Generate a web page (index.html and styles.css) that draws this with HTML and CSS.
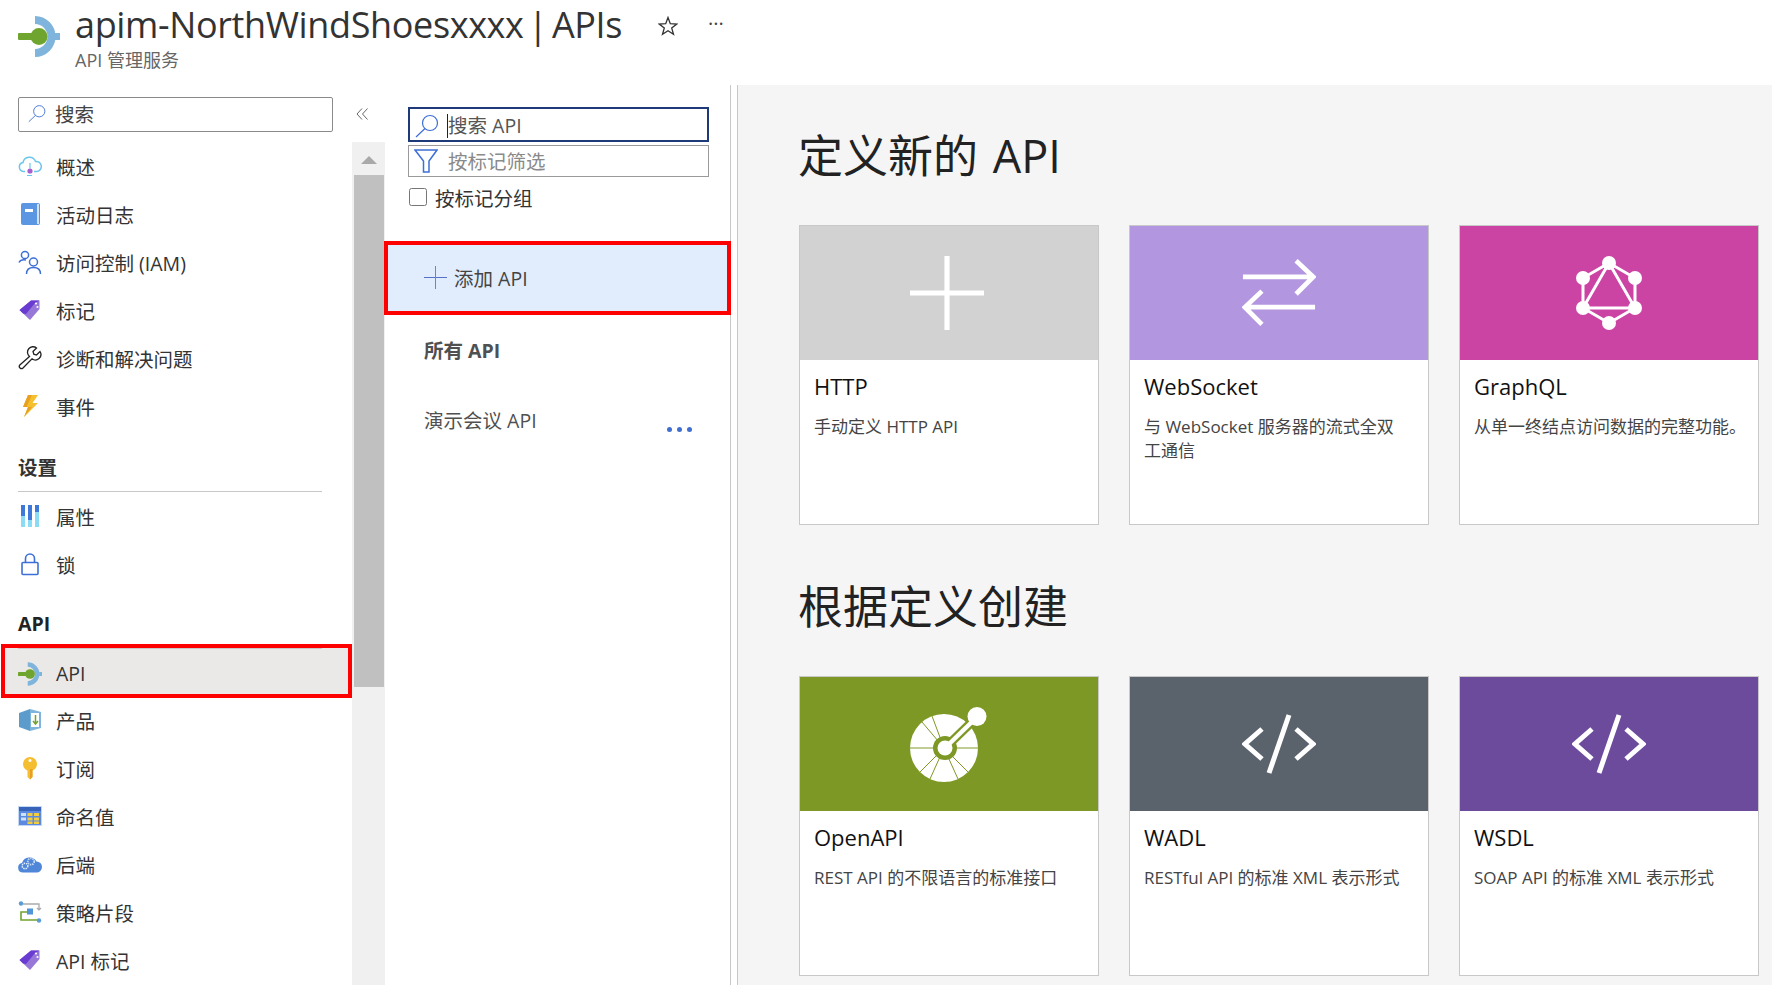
FILE: index.html
```html
<!DOCTYPE html>
<html lang="zh-CN">
  <head>
    <meta charset="UTF-8" />
    <title>apim-NorthWindShoesxxxx | APIs</title>
    <link rel="stylesheet" href="styles.css">
  </head>
  <body>
    <svg class="sprites" width="0" height="0">
      <symbol id="api-logo" viewBox="0 0 42 41">
        <path d="M17 4A16.5 16.5 0 0 1 17 37" fill="none" stroke="#7fb5dc" stroke-width="8" />
        <rect x="37" y="17" width="5" height="7" fill="#7fb5dc" />
        <rect x="0" y="17" width="14" height="7" rx="1" fill="#6fa52e" />
        <circle cx="21" cy="20.5" r="8.5" fill="#6fa52e" />
      </symbol>
      <symbol id="tag" viewBox="0 0 24 24">
        <path d="M1.500 12L13 2.500H21.500V11L12 22Z" fill="#9777d8" />
        <path d="M1.500 12L13 2.500H21.500L17 5 8 16 5 15.500Z" fill="#6a3bd0" />
        <circle cx="18" cy="5.500" r="1.100" fill="#fff" />
        <circle cx="19.500" cy="9" r="1.100" fill="#fff" />
      </symbol>
      <symbol id="search" viewBox="0 0 24 24">
        <circle cx="15" cy="9" r="7.500" fill="none" stroke="#3d6fd6" stroke-width="1.200" />
        <path d="M10 14.500L1 23" fill="none" stroke="#3d6fd6" stroke-width="1.200" />
      </symbol>
      <symbol id="code" viewBox="0 0 74 58">
        <path d="M20 14L3 29 20 44M54 14L71 29 54 44M47 0L27 58" fill="none" stroke="#fff" stroke-width="5" />
      </symbol>
    </svg>

    <header class="top-bar">
      <svg class="top-logo"><use href="#api-logo" /></svg>
      <div class="top-titles">
        <h1>apim-NorthWindShoesxxxx | APIs</h1>
        <p>API 管理服务</p>
      </div>
      <svg class="star" viewBox="0 0 20 20">
        <path d="M10 1.500L12.300 7.700 18.800 8 13.700 12 15.500 18.300 10 14.700 4.500 18.300 6.300 12 1.200 8 7.700 7.700Z" fill="none" stroke="#333" stroke-width="1.300" />
      </svg>
      <span class="more">···</span>
    </header>

    <div class="main">
      <aside class="sidebar">
        <div class="side-search">
          <svg class="search-icon"><use href="#search" /></svg>
          <span>搜索</span>
        </div>
        <nav class="nav">
          <a class="nav-item">
            <svg class="nav-icon" viewBox="0 0 24 24">
              <path d="M7 17.500H5.500A4.500 4.500 0 0 1 5 8.600 6.500 6.500 0 0 1 17.500 7.500 5 5 0 0 1 19 17.500H16" fill="none" stroke="#6cc6ec" stroke-width="1.500" />
              <circle cx="12" cy="17" r="2.600" fill="#a75fd0" />
              <path d="M12 14.500V9M9 21.500H14" stroke="#6cc6ec" stroke-width="1.200" fill="none" />
            </svg>
            <span>概述</span>
          </a>
          <a class="nav-item">
            <svg class="nav-icon" viewBox="0 0 24 24">
              <rect x="3" y="1" width="19" height="22" rx="2" fill="#5b96e2" />
              <rect x="19" y="2" width="2" height="20" fill="#cfe2f7" />
              <rect x="7" y="7" width="8" height="3" fill="#fff" />
            </svg>
            <span>活动日志</span>
          </a>
          <a class="nav-item">
            <svg class="nav-icon" viewBox="0 0 24 24" fill="none" stroke="#3d6fd6" stroke-width="1.500">
              <circle cx="7" cy="5" r="3.600" />
              <path d="M1 12.500C2 10.500 5 9.500 8 10" />
              <circle cx="15.500" cy="12" r="4" />
              <path d="M8.500 24C8.500 19.500 11.500 17.500 15.500 17.500S22.500 19.500 22.500 24" />
            </svg>
            <span>访问控制 (IAM)</span>
          </a>
          <a class="nav-item">
            <svg class="nav-icon"><use href="#tag" /></svg>
            <span>标记</span>
          </a>
          <a class="nav-item">
            <svg class="nav-icon" viewBox="0 0 24 24">
              <path d="M1.800 19L11.500 10.500A5.500 5.500 0 0 1 18.500 2L15 5.500 15.800 8.200 18.500 9 22 5.500A5.500 5.500 0 0 1 14 12.800L5 22A2.200 2.200 0 0 1 1.800 19Z" fill="none" stroke="#222" stroke-width="1.300" />
            </svg>
            <span>诊断和解决问题</span>
          </a>
          <a class="nav-item">
            <svg class="nav-icon" viewBox="0 0 24 24">
              <path d="M10 1H20L14.500 9H20L6 23 10 13H5Z" fill="#f5c02e" />
              <path d="M10 13H5L10 1H14L9 12ZM10 13L6 23 14 13Z" fill="#e8a020" />
            </svg>
            <span>事件</span>
          </a>

          <h2 class="nav-group">设置</h2>
          <a class="nav-item">
            <svg class="nav-icon" viewBox="0 0 24 24">
              <rect x="3" y="1" width="4" height="22" fill="#8adcf5" />
              <rect x="3" y="1" width="4" height="11" fill="#3f78d8" />
              <rect x="10" y="1" width="4" height="22" fill="#8adcf5" />
              <rect x="10" y="1" width="4" height="15" fill="#3f78d8" />
              <rect x="17" y="1" width="4" height="22" fill="#8adcf5" />
              <rect x="17" y="1" width="4" height="7" fill="#3f78d8" />
            </svg>
            <span>属性</span>
          </a>
          <a class="nav-item">
            <svg class="nav-icon" viewBox="0 0 24 24" fill="none" stroke="#3d6fd6" stroke-width="1.600">
              <rect x="4" y="10.500" width="16" height="12" rx="1" />
              <path d="M7.500 10.500V6.500A4.500 4.500 0 0 1 16.500 6.500V10.500" />
            </svg>
            <span>锁</span>
          </a>

          <h2 class="nav-group nav-group-api">API</h2>
          <a class="nav-item selected">
            <svg class="nav-icon"><use href="#api-logo" /></svg>
            <span>API</span>
          </a>
          <a class="nav-item">
            <svg class="nav-icon" viewBox="0 0 24 24">
              <path d="M1 5L12 1V23L1 19Z" fill="#5c9ccc" />
              <path d="M12 1L23 4V20L12 23Z" fill="#7fb5dc" />
              <rect x="13" y="5" width="8" height="14" fill="#fff" />
              <path d="M17.500 7V15M15 13L17.500 16 20 13" fill="none" stroke="#6fa52e" stroke-width="1.500" />
            </svg>
            <span>产品</span>
          </a>
          <a class="nav-item">
            <svg class="nav-icon" viewBox="0 0 24 24">
              <circle cx="12" cy="8" r="7" fill="#f5bd30" />
              <path d="M9.500 13H14.500V21L12 23.500 9.500 21Z" fill="#f5bd30" />
              <path d="M12 13H14.500V21L12 23.500Z" fill="#e8a020" />
              <circle cx="12" cy="4.500" r="1.500" fill="#fff" />
            </svg>
            <span>订阅</span>
          </a>
          <a class="nav-item">
            <svg class="nav-icon" viewBox="0 0 24 20">
              <rect x="0.500" y="0.500" width="23" height="19" fill="#5b8ae0" stroke="#c4d7f3" />
              <rect x="1" y="1" width="22" height="4" fill="#3763b8" />
              <path d="M3 7H8V10H3ZM3 11.500H8V14.500H3Z" fill="#cfe0fa" />
              <path d="M9.500 7H14.500V10H9.500ZM16 7H21V10H16ZM9.500 11.500H14.500V14.500H9.500ZM16 11.500H21V14.500H16ZM9.500 15.500H14.500V18H9.500ZM16 15.500H21V18H16Z" fill="#f2cd3f" />
            </svg>
            <span>命名值</span>
          </a>
          <a class="nav-item">
            <svg class="nav-icon" viewBox="0 0 24 18">
              <path d="M5 17.500A4.800 4.800 0 0 1 4 8 8 8 0 0 1 18.500 6.500 5.500 5.500 0 0 1 18.500 17.500Z" fill="#4f86d8" />
              <circle cx="7" cy="11" r="2.800" fill="none" stroke="#dcebfa" stroke-width="1.500" stroke-dasharray="1.500 0.800" />
              <circle cx="13" cy="6.500" r="3.200" fill="none" stroke="#c5d9f3" stroke-width="1.800" stroke-dasharray="1.500 0.800" />
            </svg>
            <span>后端</span>
          </a>
          <a class="nav-item">
            <svg class="nav-icon" viewBox="0 0 24 24" fill="none">
              <path d="M5 4H21V10M21 10L19 8M21 10L23 8" stroke="#aaa" stroke-width="1.300" />
              <path d="M14 12H3V20H20" stroke="#6fa52e" stroke-width="1.600" />
              <rect x="9" y="8.500" width="6" height="6" fill="#4f95d8" />
              <circle cx="3" cy="3.500" r="2.200" fill="#5b9bd5" />
              <circle cx="21" cy="20.500" r="2.200" fill="#5b9bd5" />
            </svg>
            <span>策略片段</span>
          </a>
          <a class="nav-item">
            <svg class="nav-icon"><use href="#tag" /></svg>
            <span>API 标记</span>
          </a>
        </nav>
      </aside>

      <div class="side-scroll">
        <div class="collapse">
          <svg class="collapse-icon" viewBox="0 0 12 12">
            <path d="M6 0.500L1 6 6 11.500M11.500 0.500L6.500 6 11.500 11.500" fill="none" stroke="#666" />
          </svg>
        </div>
        <div class="scroll-track">
          <div class="scroll-up"><i></i></div>
          <div class="scroll-thumb"></div>
        </div>
      </div>

      <section class="api-panel">
        <div class="api-list">
          <div class="api-search">
            <svg class="api-search-icon"><use href="#search" /></svg>
            <span class="caret">搜索 API</span>
          </div>
          <div class="api-filter">
            <svg class="api-search-icon" viewBox="0 0 24 24">
              <path d="M1 1H23L15 12V23H9.500V12Z" fill="none" stroke="#3d6fd6" stroke-width="1.500" />
            </svg>
            <span>按标记筛选</span>
          </div>
          <label class="group-check">
            <input type="checkbox" />
            <span>按标记分组</span>
          </label>
          <div class="add-api">
            <svg class="plus" viewBox="0 0 23 23">
              <path d="M0 11.500H23" stroke="#5470c8" />
              <path d="M11.500 0V23" stroke="#8a72d8" />
            </svg>
            <span>添加 API</span>
          </div>
          <div class="api-all">所有 API</div>
          <div class="api-row">
            <span>演示会议 API</span>
            <span class="row-dots"><i></i><i></i><i></i></span>
          </div>
        </div>
      </section>

      <main class="content">
        <h2>定义新的 API</h2>
        <div class="cards">
          <div class="card">
            <div class="card-img bg-http">
              <svg class="card-icon plus-icon" viewBox="0 0 72 72">
                <path d="M36 0V72M0 36H72" stroke="#fff" stroke-width="5" />
              </svg>
            </div>
            <div class="card-body">
              <h3>HTTP</h3>
              <p>手动定义 HTTP API</p>
            </div>
          </div>
          <div class="card">
            <div class="card-img bg-ws">
              <svg class="card-icon" viewBox="0 0 78 70" fill="none" stroke="#fff" stroke-width="5">
                <path d="M1 18H74M57 1L75 18 57 36" />
                <path d="M77 50H4M21 33L3 50 21 68" />
              </svg>
            </div>
            <div class="card-body">
              <h3>WebSocket</h3>
              <p>与 WebSocket 服务器的流式全双<br />工通信</p>
            </div>
          </div>
          <div class="card">
            <div class="card-img bg-graphql">
              <svg class="card-icon" viewBox="0 0 68 74">
                <path d="M34 7L60 22V52L34 67 8 52V22ZM34 7L8 52H60Z" fill="none" stroke="#fff" stroke-width="3" />
                <g fill="#fff">
                  <circle cx="34" cy="7" r="7" />
                  <circle cx="60" cy="22" r="7" />
                  <circle cx="60" cy="52" r="7" />
                  <circle cx="34" cy="67" r="7" />
                  <circle cx="8" cy="52" r="7" />
                  <circle cx="8" cy="22" r="7" />
                </g>
              </svg>
            </div>
            <div class="card-body">
              <h3>GraphQL</h3>
              <p>从单一终结点访问数据的完整功能。</p>
            </div>
          </div>
        </div>

        <h2 class="second">根据定义创建</h2>
        <div class="cards">
          <div class="card">
            <div class="card-img bg-openapi">
              <svg class="card-icon openapi-icon" viewBox="0 0 78 75">
                <circle cx="34" cy="41" r="34" fill="#fff" />
                <path d="M0 41H68M34 41L12 15M34 41L10 65M34 41L58 65M34 41L22 9M34 41L20 72M34 41L48 72" stroke="#7e9826" stroke-width="1" />
                <circle cx="35" cy="41" r="12" fill="#7e9826" />
                <path d="M36 40L68 9" stroke="#7e9826" stroke-width="9" />
                <path d="M36 40L68 9" stroke="#fff" stroke-width="4.500" />
                <circle cx="35" cy="41" r="7.500" fill="#fff" />
                <circle cx="67" cy="9.500" r="9.500" fill="#fff" />
              </svg>
            </div>
            <div class="card-body">
              <h3>OpenAPI</h3>
              <p>REST API 的不限语言的标准接口</p>
            </div>
          </div>
          <div class="card">
            <div class="card-img bg-wadl">
              <svg class="card-icon"><use href="#code" /></svg>
            </div>
            <div class="card-body">
              <h3>WADL</h3>
              <p>RESTful API 的标准 XML 表示形式</p>
            </div>
          </div>
          <div class="card">
            <div class="card-img bg-wsdl">
              <svg class="card-icon"><use href="#code" /></svg>
            </div>
            <div class="card-body">
              <h3>WSDL</h3>
              <p>SOAP API 的标准 XML 表示形式</p>
            </div>
          </div>
        </div>
      </main>
    </div>
  </body>
</html>
```

FILE: styles.css
```css
* {
  box-sizing: border-box;
}

html,
body {
  margin: 0;
  height: 985px;
  overflow: hidden;
}

body {
  background: #fff;
  color: #333;
  font-family: "Open Sans", "Noto Sans CJK SC", sans-serif;
  font-size: 19.5px;
}

.sprites {
  display: block;
  height: 0;
}

/* top bar */
.top-bar {
  display: flex;
  height: 85px;
  padding-left: 18px;
}
.top-logo {
  width: 42px;
  height: 41px;
  margin-top: 16px;
}
.top-titles {
  margin-left: 15px;
  width: 583px;
}
.top-titles h1 {
  margin: 0;
  padding-top: 1px;
  height: 48px;
  line-height: 48px;
  font-size: 36px;
  font-weight: 400;
  letter-spacing: -0.37px;
  word-spacing: -4.5px;
  white-space: nowrap;
}
.top-titles p {
  margin: 0;
  line-height: 24px;
  font-size: 18px;
  color: #666;
}
.star {
  width: 20px;
  height: 20px;
  margin-top: 16px;
}
.more {
  margin: 10px 0 0 30px;
  font-size: 20px;
  line-height: 28px;
  color: #444;
}

/* layout */
.main {
  display: flex;
  height: 900px;
}

/* left menu */
.sidebar {
  width: 352px;
}
.side-search {
  display: flex;
  align-items: center;
  gap: 9px;
  width: 315px;
  height: 35px;
  margin: 12px 0 0 18px;
  padding: 0 0 2px 9px;
  border: 1px solid #8a8a8a;
  border-radius: 2px;
  color: #444;
}
.search-icon {
  width: 18px;
  height: 19px;
}
.nav {
  margin-top: 10px;
}
.nav-item {
  display: flex;
  align-items: center;
  gap: 14px;
  height: 48px;
  padding-left: 18px;
}
.nav-icon {
  width: 24px;
  height: 24px;
}
.nav-group {
  display: flex;
  align-items: flex-end;
  height: 62px;
  margin: 0 30px 0 18px;
  padding-bottom: 10px;
  border-bottom: 1px solid #c8c8c8;
  font-size: 19.5px;
  font-weight: 700;
}
.nav-group-api {
  height: 56px;
  padding-bottom: 7px;
  border-bottom: none;
  color: #222;
}
.nav-item.selected {
  position: relative;
  height: 54px;
  margin: 0 0 -2px 1px;
  padding: 5px 0 0 13px;
  border: 4px solid #f00;
  background: #ebe9e7;
}
.nav-item.selected::before {
  content: "";
  position: absolute;
  top: 0;
  left: 13px;
  right: 26px;
  height: 1px;
  background: #c8c8c8;
}

/* left menu scrollbar */
.side-scroll {
  width: 33px;
}
.collapse {
  height: 57px;
  padding: 23px 0 0 4px;
}
.collapse-icon {
  display: block;
  width: 12px;
  height: 12px;
}
.scroll-track {
  height: 843px;
  background: #f0f0f0;
}
.scroll-up {
  display: flex;
  justify-content: center;
  height: 33px;
  padding-top: 14px;
}
.scroll-up i {
  width: 0;
  height: 0;
  border-left: 8px solid transparent;
  border-right: 8px solid transparent;
  border-bottom: 8px solid #a9a9a9;
}
.scroll-thumb {
  width: 30px;
  height: 512px;
  margin-left: 2px;
  background: #c0c0c0;
}

/* api list */
.api-panel {
  width: 353px;
  border-right: 1px solid #c8c8c8;
}
.api-list {
  width: 346px;
  height: 100%;
  padding-top: 22px;
  border-right: 1px solid #c8c8c8;
}
.api-search,
.api-filter {
  display: flex;
  align-items: center;
  margin-left: 23px;
  width: 301px;
  padding-left: 5px;
}
.api-search {
  height: 35px;
  gap: 8px;
  padding-top: 2px;
  border: 2px solid #1f3a78;
  color: #555;
}
.api-filter {
  height: 32px;
  margin-top: 3px;
  padding-bottom: 1px;
  gap: 10px;
  border: 1px solid #9a9a9a;
  color: #8a8a8a;
}
.api-search-icon {
  width: 24px;
  height: 24px;
}
.caret {
  border-left: 1px solid #222;
  line-height: 24px;
}
.group-check {
  display: flex;
  align-items: center;
  gap: 8px;
  height: 26px;
  margin: 7px 0 0 24px;
}
.group-check input {
  width: 18px;
  height: 18px;
  margin: 0;
}
.add-api {
  display: flex;
  align-items: center;
  gap: 7px;
  width: 347px;
  height: 74px;
  margin: 31px 0 0 -1px;
  padding: 0 0 2px 36px;
  border: 4px solid #f00;
  background: #e1edfc;
  color: #444;
}
.plus {
  width: 23px;
  height: 23px;
}
.api-all {
  margin: 19px 0 0 39px;
  line-height: 34px;
  font-weight: 700;
  color: #505050;
}
.api-row {
  display: flex;
  margin: 36px 0 0 39px;
  line-height: 34px;
  color: #505050;
}
.row-dots {
  display: flex;
  gap: 5px;
  margin: 23px 0 0 130px;
}
.row-dots i {
  width: 5px;
  height: 5px;
  border-radius: 50%;
  background: #3f6fd0;
}

/* content */
.content {
  flex: 1;
  padding-left: 60px;
  background: #f5f5f5;
}
.content h2 {
  margin: 41px 0 39px;
  height: 60px;
  line-height: 60px;
  font-size: 45px;
  font-weight: 400;
  word-spacing: 3px;
  color: #222;
}
.content h2.second {
  margin-top: 52px;
}
.cards {
  display: grid;
  grid-template-columns: repeat(3, 300px);
  gap: 30px;
  margin-left: 1px;
}
.card {
  height: 300px;
  border: 1px solid #c8c8c8;
  background: #fff;
}
.card-img {
  display: flex;
  align-items: center;
  justify-content: center;
  height: 134px;
}
.card-icon {
  width: 74px;
  height: 74px;
}
.plus-icon {
  margin-right: 4px;
}
.openapi-icon {
  width: 78px;
  height: 75px;
}
.bg-http {
  background: #d2d2d2;
}
.bg-ws {
  background: #b396e0;
}
.bg-graphql {
  background: #cb44a4;
}
.bg-openapi {
  background: #7e9826;
}
.bg-wadl {
  background: #5a626b;
}
.bg-wsdl {
  background: #6c4b9d;
}
.card-body {
  padding: 11px 8px 0 14px;
}
.card-body h3 {
  margin: 0;
  line-height: 30px;
  font-size: 22px;
  font-weight: 400;
  color: #111;
}
.card-body p {
  margin: 14px 0 0;
  line-height: 24px;
  font-size: 17px;
  color: #444;
}
```
